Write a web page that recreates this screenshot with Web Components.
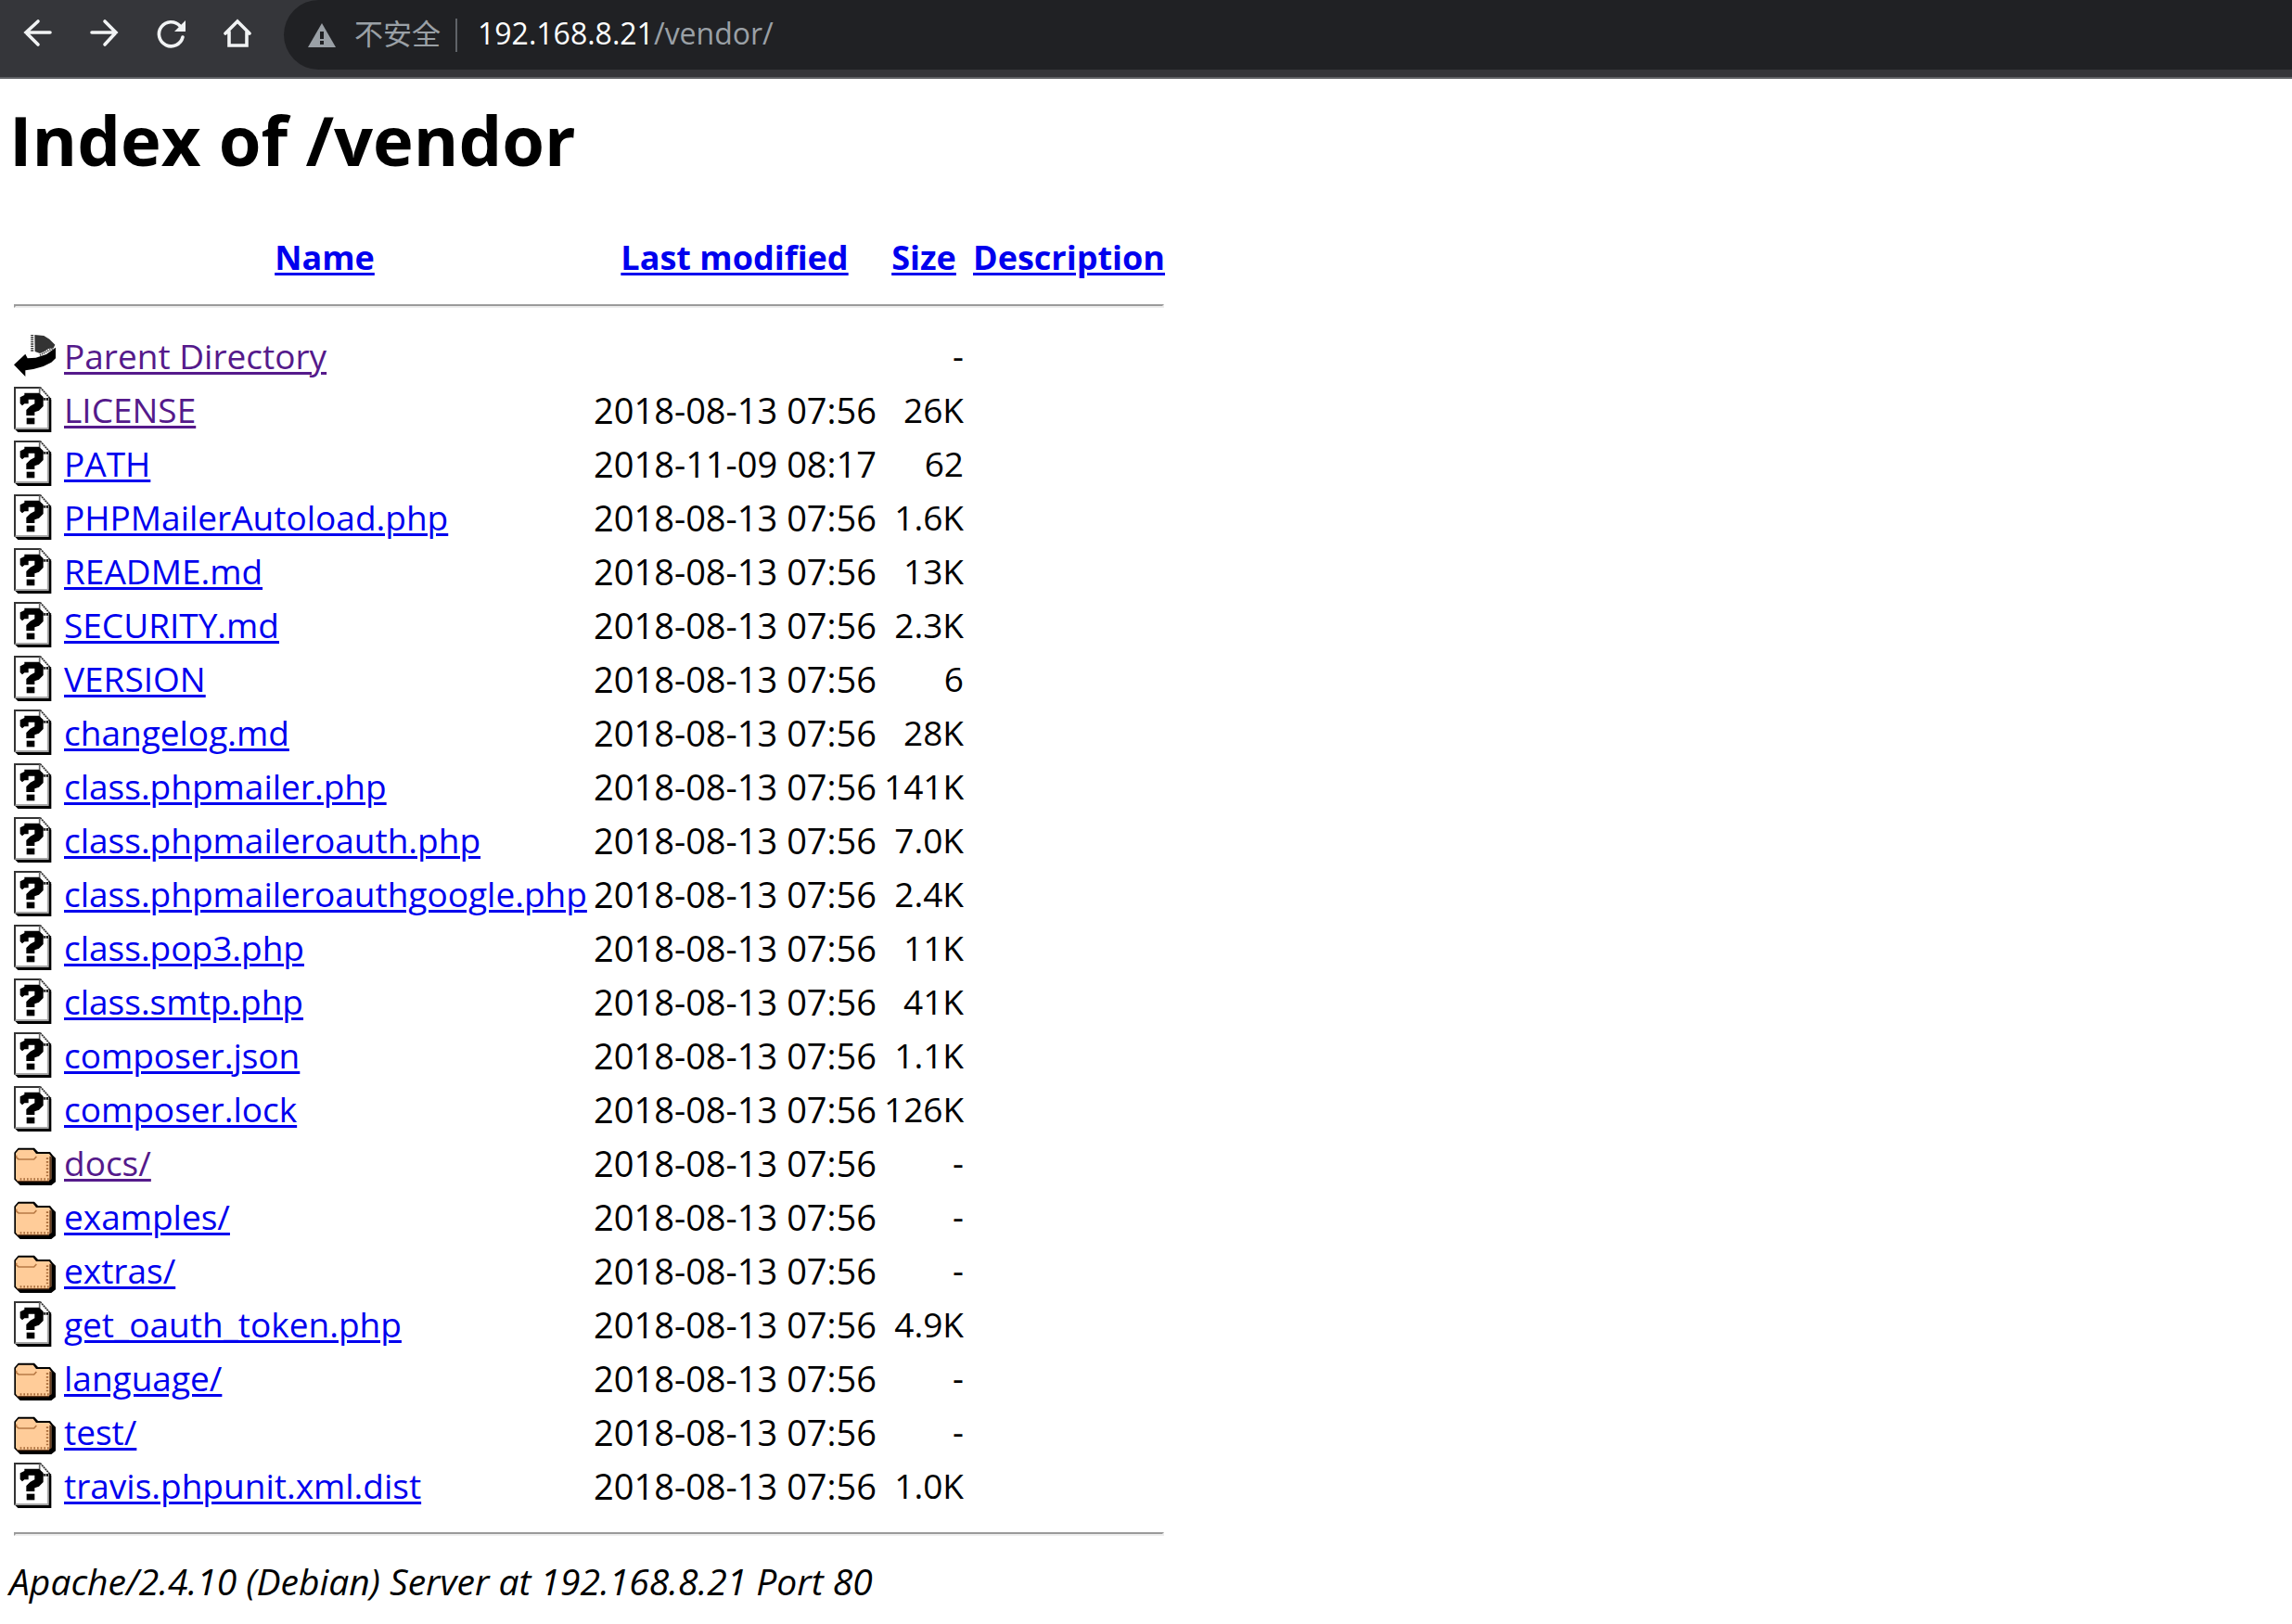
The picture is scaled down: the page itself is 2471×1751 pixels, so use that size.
<!DOCTYPE html>
<html lang="en">
<head>
<meta charset="utf-8">
<title>Index of /vendor</title>
<style>
  body { margin: 0; background: #fff; color: #000; font-family: "Open Sans", "Noto Sans CJK SC", sans-serif; }
</style>
</head>
<body>
<browser-bar host="192.168.8.21" path="/vendor/">不安全</browser-bar>
<index-page>
  <span slot="title">Index of /vendor</span>
  <directory-listing></directory-listing>
  <span slot="signature">Apache/2.4.10 (Debian) Server at 192.168.8.21 Port 80</span>
</index-page>

<script>
const BAR_ICONS = {
  back: '<path d="M29 13H3M16 1 3 13l13 13"/>',
  forward: '<path d="M2 13h26M16 1l12 12-12 13"/>',
  reload: '<path d="M28 18A13 13 0 1 1 25 6"/><path d="M31 0v12H19z" fill="#f1f3f4" stroke="none"/>',
  home: '<path d="M2 14 15 1l13 13M6 12v15h19V12"/>'
};

class BarButton extends HTMLElement {
  connectedCallback() {
    const kind = this.getAttribute('kind');
    this.attachShadow({ mode: 'open' }).innerHTML = `
      <style>
        :host { display: block; }
        button { display: flex; align-items: center; justify-content: center; width: 72px; height: 72px; padding: 0; border: 0; background: none; }
        svg { width: 30px; height: 30px; overflow: visible; fill: none; stroke: #f1f3f4; stroke-width: 3.6; stroke-linejoin: miter; stroke-linecap: round; }
      </style>
      <button type="button" aria-label="${kind}"><svg viewBox="0 0 30 28">${BAR_ICONS[kind]}</svg></button>`;
  }
}
customElements.define('bar-button', BarButton);

class BrowserBar extends HTMLElement {
  connectedCallback() {
    this.attachShadow({ mode: 'open' }).innerHTML = `
      <style>
        :host { display: flex; align-items: flex-start; box-sizing: border-box; height: 85px; padding-left: 4px; background: #35363a; border-bottom: 2px solid #5f6165; overflow: hidden; }
        .address { display: flex; flex: 1; align-items: center; height: 75px; margin-left: 14px; padding-left: 26px; border-radius: 38px 0 0 38px; background: #202124; white-space: nowrap; line-height: 72px; }
        svg { width: 30px; height: 26px; margin-right: 20px; }
        .state, .url { height: 75px; color: #9aa0a6; }
        .state { font-size: 31px; }
        .rule { width: 2px; height: 36px; margin: 0 22px 0 16px; background: #5f6368; }
        .url { font-size: 32px; }
        .host { color: #fff; }
      </style>
      <bar-button kind="back"></bar-button>
      <bar-button kind="forward"></bar-button>
      <bar-button kind="reload"></bar-button>
      <bar-button kind="home"></bar-button>
      <div class="address">
        <svg viewBox="0 0 30 26"><path d="M15 0 30 26H0z" fill="#9aa0a6"/><path d="M13 9h4v8h-4zM13 19h4v4h-4z" fill="#202124"/></svg>
        <span class="state"><slot></slot></span>
        <span class="rule"></span>
        <span class="url"><span class="host">${this.getAttribute('host')}</span>${this.getAttribute('path')}</span>
      </div>`;
  }
}
customElements.define('browser-bar', BrowserBar);

const FILE_ICONS = {
  back: `
    <path d="M67 6 97 9 115 20 133 38 128 49 112 51 98 60 84 66 68 60z" fill="#333"/>
    <path d="M59 6v54" stroke="#333" stroke-width="9" stroke-dasharray="4 3" fill="none"/>
    <path d="M84 72 106 60l22-11" stroke="#444" stroke-width="6" stroke-dasharray="4 3" fill="none"/>
    <path d="M0 103 37 68l7 14 27-2 34-11 30-22v35l-14 13-26 13-32 9-26 4v20z" fill="#000"/>`,
  unknown: `
    <path d="M3 3h83l33 39v102H14L3 134z" fill="#fff"/>
    <path d="M3 137V3h83" stroke="#333" stroke-width="6" fill="none"/>
    <path d="M85 2 120 41" stroke="#333" stroke-width="5" stroke-dasharray="6 2" fill="none"/>
    <path d="M83 3v39" stroke="#666" stroke-width="5" fill="none"/>
    <path d="M81 40h40" stroke="#000" stroke-width="8" stroke-dasharray="6 2" fill="none"/>
    <path d="M110 46v86" stroke="#aaa" stroke-width="5" fill="none"/>
    <path d="M4 135h110" stroke="#888" stroke-width="5" fill="none"/>
    <path d="M113 42h8v105H13l-9-9h109z" fill="#000"/>
    <path d="M34 20h47l14 13v30L81 77l-14 5v11H40V75l13-13 14-7V41H47v14H34l-7 6-7-7V34l14-7z" fill="#000"/>
    <path d="M41 101h26v20H41z" fill="#000"/>`,
  folder: `
    <path d="M14 26h52l12 13h39l9 11 9 9v77l-14 11H20L1 128V41z" fill="#000"/>
    <path d="M15 32h47l10 13h42l7 9v71l-8 7H11l-5-6V43z" fill="#fc9"/>
    <path d="M8 50v7l7 6h50l8-9" fill="none" stroke="#b87a45" stroke-width="5"/>
    <path d="M118 53v76" stroke="#663d20" stroke-width="6"/>
    <path d="M108 58v66M20 127h94" fill="none" stroke="#a86b3a" stroke-width="7" stroke-dasharray="5 6"/>
    <path d="M10 134h104" stroke="#663d20" stroke-width="4"/>`
};

class FileIcon extends HTMLElement {
  connectedCallback() {
    this.attachShadow({ mode: 'open' }).innerHTML = `
      <style>
        :host { display: block; }
        svg { display: block; width: 45px; height: 50px; }
      </style>
      <svg viewBox="0 0 135 150" aria-hidden="true">${FILE_ICONS[this.getAttribute('kind')]}</svg>`;
  }
}
customElements.define('file-icon', FileIcon);

const D = '2018-08-13 07:56';
const ENTRIES = [
  ['back', 'Parent Directory', '', '-', true],
  ['unknown', 'LICENSE', D, '26K', true],
  ['unknown', 'PATH', '2018-11-09 08:17', '62'],
  ['unknown', 'PHPMailerAutoload.php', D, '1.6K'],
  ['unknown', 'README.md', D, '13K'],
  ['unknown', 'SECURITY.md', D, '2.3K'],
  ['unknown', 'VERSION', D, '6'],
  ['unknown', 'changelog.md', D, '28K'],
  ['unknown', 'class.phpmailer.php', D, '141K'],
  ['unknown', 'class.phpmaileroauth.php', D, '7.0K'],
  ['unknown', 'class.phpmaileroauthgoogle.php', D, '2.4K'],
  ['unknown', 'class.pop3.php', D, '11K'],
  ['unknown', 'class.smtp.php', D, '41K'],
  ['unknown', 'composer.json', D, '1.1K'],
  ['unknown', 'composer.lock', D, '126K'],
  ['folder', 'docs/', D, '-', true],
  ['folder', 'examples/', D, '-'],
  ['folder', 'extras/', D, '-'],
  ['unknown', 'get_oauth_token.php', D, '4.9K'],
  ['folder', 'language/', D, '-'],
  ['folder', 'test/', D, '-'],
  ['unknown', 'travis.phpunit.xml.dist', D, '1.0K']
];

class DirectoryListing extends HTMLElement {
  connectedCallback() {
    const rows = ENTRIES.map(([icon, name, date, size, seen]) => `
      <tr><td><file-icon kind="${icon}"></file-icon></td><td><a href="#${name}"${seen ? ' class="seen"' : ''}>${name}</a></td><td class="date">${date}</td><td class="size">${size}</td><td></td></tr>`).join('');
    this.attachShadow({ mode: 'open' }).innerHTML = `
      <style>
        :host { display: block; font-size: 37px; line-height: 58px; }
        table { border-collapse: collapse; table-layout: fixed; width: 1242px; }
        .c-icon { width: 54px; } .c-name { width: 571px; } .c-date { width: 313px; } .c-size { width: 95px; }
        td, th { height: 58px; padding: 0 9px 0 0; white-space: nowrap; text-align: left; }
        th { font-size: 36px; font-weight: 700; text-align: center; }
        th:last-child { padding-right: 0; }
        .date { font-size: 38px; }
        .size { text-align: right; }
        a { color: #00e; text-decoration: underline; text-decoration-thickness: 3px; text-underline-offset: 3px; }
        a.seen { color: #551a8b; }
        .line { height: auto; padding: 0; }
        hr { margin: 21px 2px 23px 0; border: 2px solid; border-color: #9a9a9a #eee #eee #9a9a9a; }
      </style>
      <table>
        <colgroup><col class="c-icon"><col class="c-name"><col class="c-date"><col class="c-size"><col></colgroup>
        <thead>
          <tr><th></th><th><a href="#name">Name</a></th><th><a href="#modified">Last modified</a></th><th><a href="#size">Size</a></th><th><a href="#description">Description</a></th></tr>
          <tr><td class="line" colspan="5"><hr></td></tr>
        </thead>
        <tbody>${rows}
          <tr><td class="line" colspan="5"><hr></td></tr>
        </tbody>
      </table>`;
  }
}
customElements.define('directory-listing', DirectoryListing);

class IndexPage extends HTMLElement {
  connectedCallback() {
    this.attachShadow({ mode: 'open' }).innerHTML = `
      <style>
        :host { display: block; padding: 16px 10px 0; }
        h1 { margin: 0 0 48px; font-size: 74px; line-height: 100px; font-weight: 700; }
        .listing { padding-left: 5px; }
        address { font-size: 39px; line-height: 52px; font-style: italic; }
      </style>
      <h1><slot name="title"></slot></h1>
      <div class="listing"><slot></slot></div>
      <address><slot name="signature"></slot></address>`;
  }
}
customElements.define('index-page', IndexPage);
</script>
</body>
</html>
